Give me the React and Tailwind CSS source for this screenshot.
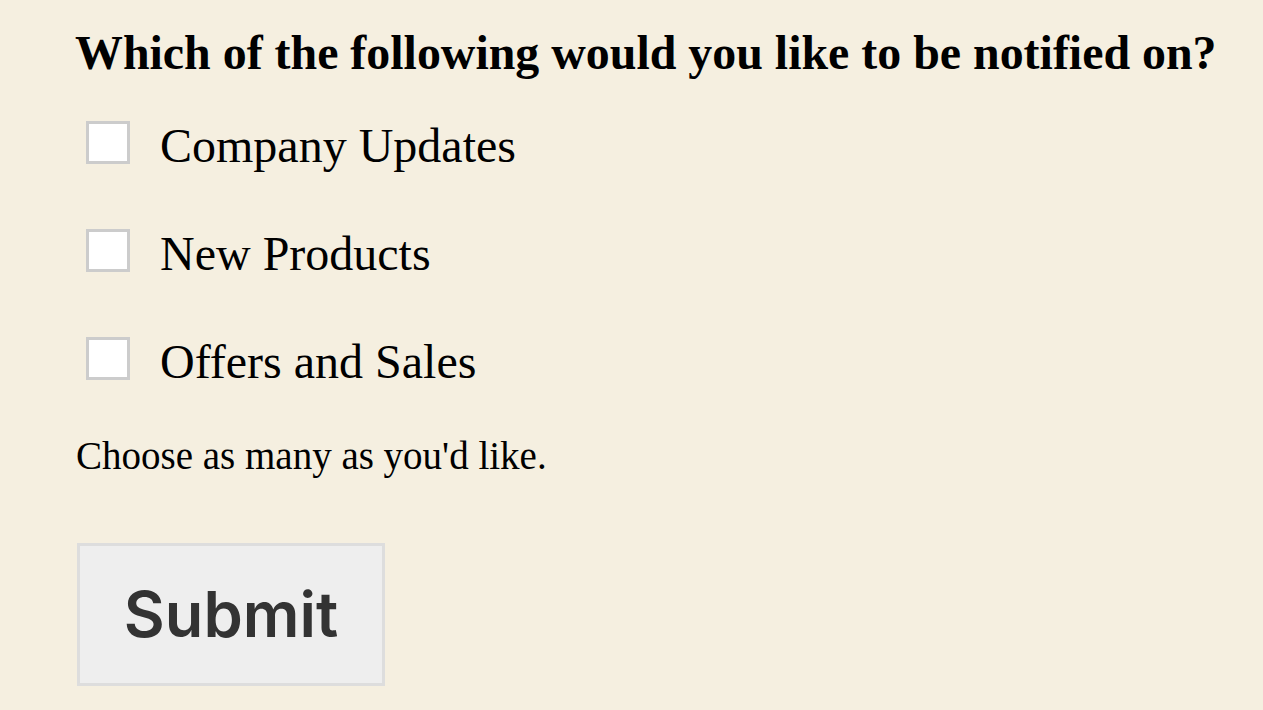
export default function App() {
  const options = ["Company Updates", "New Products", "Offers and Sales"];
  return (
    <div className="min-h-[710px] bg-[#f5efe0] pl-[77px] pt-[27px] text-black" style={{ fontFamily: '"Liberation Serif", serif' }}>
      <h2 className="-ml-[2px] whitespace-nowrap text-[47.9px] font-bold leading-[52px]">Which of the following would you like to be notified on?</h2>
      <div className="mt-[41px] flex flex-col gap-[64px]">
        {options.map((o) => (
          <label key={o} className="flex items-center gap-[30px] pl-[9px]">
            <span className="h-[43px] w-[44px] border-[3px] border-[#cccccc] bg-white" />
            <span className="relative top-[4px] text-[48px] leading-[44px]">{o}</span>
          </label>
        ))}
      </div>
      <p className="-ml-[1px] mt-[54px] text-[39px] leading-[44px]">Choose as many as you'd like.</p>
      <button className="mt-[65px] h-[143px] w-[308px] border-[3px] border-[#dddddd] bg-[#eeeeee] text-[63px] font-semibold text-[#333333]" style={{ fontFamily: 'Inter, sans-serif' }}>
        Submit
      </button>
    </div>
  );
}
